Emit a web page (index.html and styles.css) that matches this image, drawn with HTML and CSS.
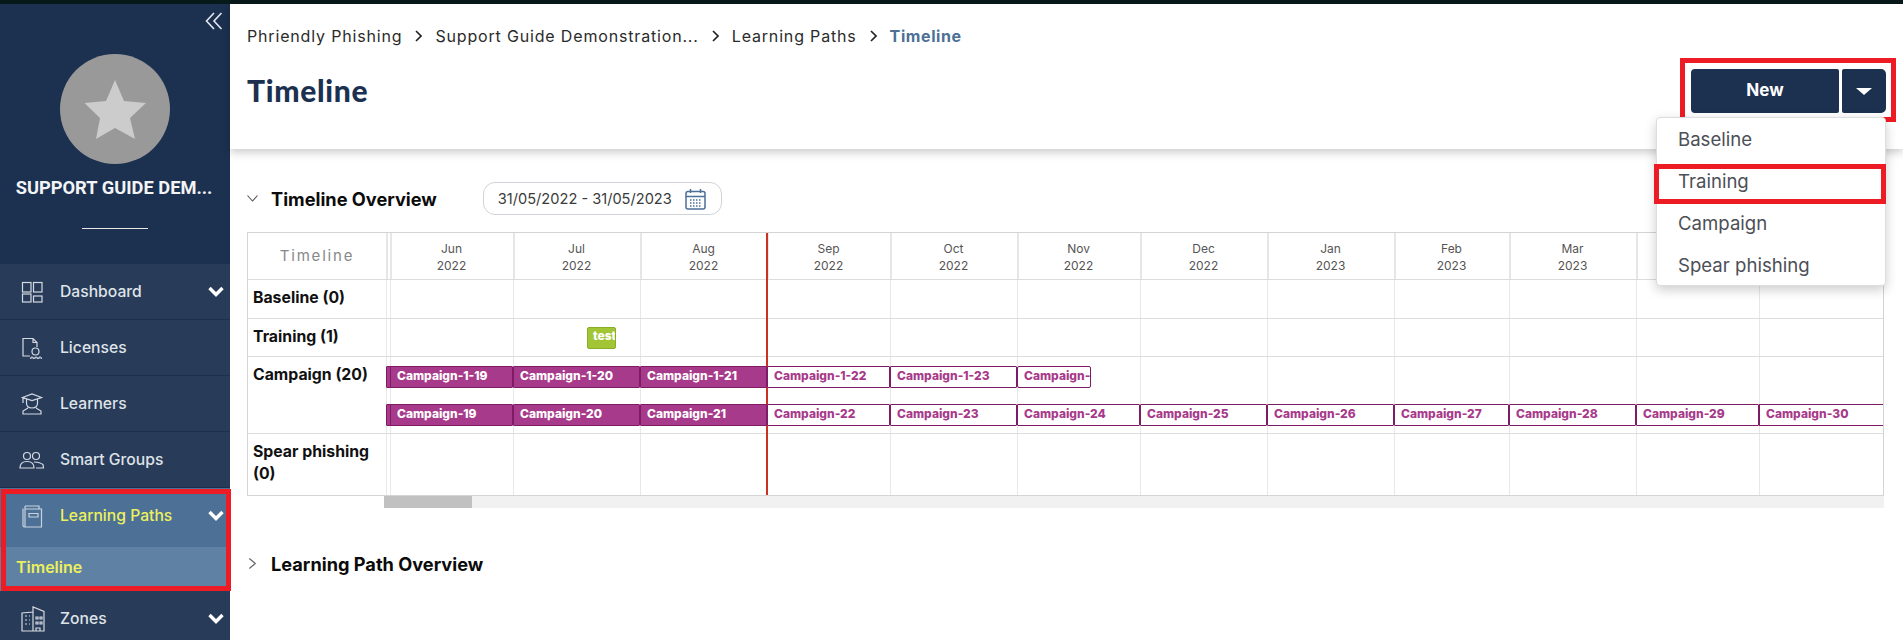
FILE: index.html
```html
<!DOCTYPE html>
<html lang="en">
<head>
<meta charset="utf-8">
<title>Timeline</title>
<link rel="stylesheet" href="styles.css">
</head>
<body>
<div class="topbar"></div>
<div class="app">
  <aside class="sidebar">
    <div class="collapse">
      <svg width="18" height="18" viewBox="0 0 18 18" fill="none" stroke="#e6e9ee" stroke-width="1.6"><path d="M9 1 1.5 9 9 17M16.5 1 9 9l7.500 8"/></svg>
    </div>
    <svg class="logo" width="110" height="110" viewBox="0 0 110 110"><circle cx="55" cy="55" r="55" fill="#999"/><path d="M55 26 64 47 86 49 70 64 75 85 55 74 36 85 40 64 24.500 49 46 47Z" fill="#ccc"/></svg>
    <div class="org">SUPPORT GUIDE DEM...</div>
    <div class="divider"></div>
    <nav class="menu">
      <div class="item">
        <svg class="icon" width="22" height="22" viewBox="0 0 22 22" fill="none" stroke="#d5dae2" stroke-width="1.200"><rect x="1.500" y="1.500" width="8.500" height="9.500"/><rect x="12.500" y="1.500" width="8.500" height="9.500"/><rect x="1.500" y="13" width="8.500" height="8"/><rect x="12.500" y="15" width="8.500" height="6"/></svg>
        <span>Dashboard</span>
        <svg class="chev" width="16" height="11" viewBox="0 0 16 11" fill="none" stroke="#fff" stroke-width="3.400"><path d="M1.500 2 8 8.500 14.500 2"/></svg>
      </div>
      <div class="item">
        <svg class="icon" width="22" height="22" viewBox="0 0 22 22" fill="none" stroke="#d5dae2" stroke-width="1.200"><path d="M9 19H2V1.500h10l4 4V10M12 1.500v4h4"/><circle cx="14.500" cy="14.500" r="3.500"/><path d="M11 20a1.300 1.300 0 1 0 .1 0M15 20a1.300 1.300 0 1 0 .1 0M19 20a1.300 1.300 0 1 0 .1 0"/></svg>
        <span>Licenses</span>
      </div>
      <div class="item">
        <svg class="icon" width="22" height="22" viewBox="0 0 22 22" fill="none" stroke="#d5dae2" stroke-width="1.200"><path d="M1.500 4.500 11 1l9.500 3.500L11 7.500ZM2 5v5M5.500 6.500V10c0 3.500 2.500 5 5.500 5s5.500-1.500 5.500-5V6.500M7 15l-5 3v3h18v-3l-5-3"/></svg>
        <span>Learners</span>
      </div>
      <div class="item">
        <svg class="icon icon-wide" width="26" height="22" viewBox="0 0 26 22" fill="none" stroke="#d5dae2" stroke-width="1.200"><circle cx="8" cy="7" r="3.500"/><circle cx="17" cy="7" r="3.500"/><path d="M1 19c0-4.500 3-6.500 7-6.500s7 2 7 6.500ZM15 13c3 .2 7 1 9 2.500l.5 3.500H17"/></svg>
        <span>Smart Groups</span>
      </div>
      <div class="group">
        <div class="item active">
          <svg class="icon" width="22" height="24" viewBox="0 0 22 24" fill="none" stroke="#c9d3df" stroke-width="1.200"><path d="M4 2h14v3M2 4.500V21.500c0 .8.700 1.500 1.500 1.500M4 5h16.500v18H4ZM4 2v3M8 9.500h9V13H8Z"/></svg>
          <span>Learning Paths</span>
          <svg class="chev" width="16" height="11" viewBox="0 0 16 11" fill="none" stroke="#fff" stroke-width="3.400"><path d="M1.500 2 8 8.500 14.500 2"/></svg>
        </div>
        <div class="sub">Timeline</div>
        <div class="mark mark-nav"></div>
      </div>
      <div class="item">
        <svg class="icon icon-mid" width="24" height="26" viewBox="0 0 24 26" fill="none" stroke="#d5dae2" stroke-width="1.200"><path d="M1 25V7l11-1V1l11 4.500V25ZM12 6v19M4 10h2M8 10h1M4 14h2M8 14h1M4 18h2M8 18h1M15 11h2v2h-2ZM19 11h2v2h-2ZM15 16h2v2h-2ZM19 16h2v2h-2ZM15 25v-3h4v3"/></svg>
        <span>Zones</span>
        <svg class="chev" width="16" height="11" viewBox="0 0 16 11" fill="none" stroke="#fff" stroke-width="3.400"><path d="M1.500 2 8 8.500 14.500 2"/></svg>
      </div>
    </nav>
  </aside>

  <main class="main">
    <header class="head">
      <div class="crumbs">
        <span>Phriendly Phishing</span>
        <svg class="sep" width="7" height="12" viewBox="0 0 7 12" fill="none" stroke="#222" stroke-width="1.600"><path d="M1 1l5 5-5 5"/></svg>
        <span>Support Guide Demonstration...</span>
        <svg class="sep" width="7" height="12" viewBox="0 0 7 12" fill="none" stroke="#222" stroke-width="1.600"><path d="M1 1l5 5-5 5"/></svg>
        <span>Learning Paths</span>
        <svg class="sep" width="7" height="12" viewBox="0 0 7 12" fill="none" stroke="#222" stroke-width="1.600"><path d="M1 1l5 5-5 5"/></svg>
        <span class="current">Timeline</span>
      </div>
      <div class="title-row">
        <h1>Timeline</h1>
        <div class="actions">
          <button class="btn btn-new">New</button>
          <button class="btn btn-caret"><span class="caret"></span></button>
          <div class="mark mark-new"></div>
          <ul class="dropdown">
            <li>Baseline</li>
            <li>Training</li>
            <li>Campaign</li>
            <li>Spear phishing</li>
            <li class="mark mark-training"></li>
          </ul>
        </div>
      </div>
    </header>

    <section class="overview">
      <div class="section-head">
        <svg class="toggle" width="11" height="7" viewBox="0 0 11 7" fill="none" stroke="#555" stroke-width="1.100"><path d="M.5.500l5 5.500 5-5.500"/></svg>
        <h2>Timeline Overview</h2>
        <div class="dates">
          <span>31/05/2022 - 31/05/2023</span>
          <svg width="21" height="22" viewBox="0 0 21 22" fill="none" stroke="#4c7096" stroke-width="1.500"><rect x="1" y="3.500" width="19" height="17.500" rx="2"/><path d="M1 8.500h19M5.500 1v4M15.500 1v4"/><path d="M5 12h11M5 15h11M5 18h11" stroke-dasharray="1.500 1.500"/></svg>
        </div>
      </div>

      <div class="gantt">
        <div class="today"></div>
        <div class="row row-head">
          <div class="corner">Timeline</div>
          <div class="cell"></div>
          <div class="cell month">Jun<br>2022</div>
          <div class="cell month">Jul<br>2022</div>
          <div class="cell month">Aug<br>2022</div>
          <div class="cell month">Sep<br>2022</div>
          <div class="cell month">Oct<br>2022</div>
          <div class="cell month">Nov<br>2022</div>
          <div class="cell month">Dec<br>2022</div>
          <div class="cell month">Jan<br>2023</div>
          <div class="cell month">Feb<br>2023</div>
          <div class="cell month">Mar<br>2023</div>
          <div class="cell month">Apr<br>2023</div>
          <div class="cell month">May<br>2023</div>
        </div>
        <div class="row row-baseline">
          <div class="label">Baseline (0)</div>
          <div class="cell"></div><div class="cell"></div><div class="cell"></div><div class="cell"></div><div class="cell"></div><div class="cell"></div><div class="cell"></div><div class="cell"></div><div class="cell"></div><div class="cell"></div><div class="cell"></div><div class="cell"></div><div class="cell"></div>
        </div>
        <div class="row row-training">
          <div class="label">Training (1)</div>
          <div class="cell"></div><div class="cell"></div>
          <div class="cell"><div class="test"><span>test</span></div></div>
          <div class="cell"></div><div class="cell"></div><div class="cell"></div><div class="cell"></div><div class="cell"></div><div class="cell"></div><div class="cell"></div><div class="cell"></div><div class="cell"></div><div class="cell"></div>
        </div>
        <div class="row row-campaign">
          <div class="label span">Campaign (20)</div>
          <div class="cell span c2"></div><div class="cell span c3"></div><div class="cell span c4"></div><div class="cell span c5"></div><div class="cell span c6"></div><div class="cell span c7"></div><div class="cell span c8"></div><div class="cell span c9"></div><div class="cell span c10"></div><div class="cell span c11"></div><div class="cell span c12"></div><div class="cell span c13"></div><div class="cell span c14"></div>

          <div class="bar past l1 c2"></div>
          <div class="bar past l1 c3">Campaign-1-19</div>
          <div class="bar past l1 c4">Campaign-1-20</div>
          <div class="bar past l1 c5">Campaign-1-21</div>
          <div class="bar l1 c6">Campaign-1-22</div>
          <div class="bar l1 c7">Campaign-1-23</div>
          <div class="bar l1 c8 short">Campaign-1-24</div>

          <div class="bar past l2 c2"></div>
          <div class="bar past l2 c3">Campaign-19</div>
          <div class="bar past l2 c4">Campaign-20</div>
          <div class="bar past l2 c5">Campaign-21</div>
          <div class="bar l2 c6">Campaign-22</div>
          <div class="bar l2 c7">Campaign-23</div>
          <div class="bar l2 c8">Campaign-24</div>
          <div class="bar l2 c9">Campaign-25</div>
          <div class="bar l2 c10">Campaign-26</div>
          <div class="bar l2 c11">Campaign-27</div>
          <div class="bar l2 c12">Campaign-28</div>
          <div class="bar l2 c13">Campaign-29</div>
          <div class="bar l2 c14 open">Campaign-30</div>
        </div>
        <div class="row row-spear">
          <div class="label">Spear phishing (0)</div>
          <div class="cell"></div><div class="cell"></div><div class="cell"></div><div class="cell"></div><div class="cell"></div><div class="cell"></div><div class="cell"></div><div class="cell"></div><div class="cell"></div><div class="cell"></div><div class="cell"></div><div class="cell"></div><div class="cell"></div>
        </div>
      </div>
      <div class="track"><div class="thumb"></div></div>

      <div class="section-head second">
        <svg class="toggle" width="8" height="11" viewBox="0 0 8 11" fill="none" stroke="#666" stroke-width="1.200"><path d="M.8.500l6 5-6 5"/></svg>
        <h2>Learning Path Overview</h2>
      </div>
    </section>
  </main>
</div>
</body>
</html>
```
FILE: styles.css
```css
* { box-sizing: border-box; }
html, body { margin: 0; height: 640px; overflow: hidden; background: #fff; }
body { font-family: Inter, "Liberation Sans", sans-serif; color: #222; }

.topbar { height: 4px; background: #08191a; }
.app { display: flex; height: 636px; }

/* Sidebar */
.sidebar { position: relative; width: 230px; flex: none; background: #1c3050; padding-top: 8px; }
.collapse { display: flex; justify-content: flex-end; padding-right: 7px; height: 18px; }
.logo { display: block; margin: 24px auto 0; }
.org { margin-top: 12px; height: 24px; text-align: center; padding-right: 2px; font: 700 18.300px/24px Roboto, sans-serif; color: #f2f4f6; white-space: nowrap; }
.divider { width: 66px; height: 1px; background: #e8e8e8; margin: 28px auto 35px; }
.menu { display: flex; flex-direction: column; }
.item { display: flex; align-items: center; height: 56px; padding: 0 6px 0 21px; background: #283b59; border-bottom: 1px solid #1c3050; color: #dfe3e8; font-size: 15.700px; font-weight: 500; }
.item .icon { flex: none; margin-right: 17px; }
.item .icon-wide { margin-left: -2px; margin-right: 15px; }
.item .icon-mid { margin-right: 15px; }
.item .chev { margin-left: auto; }
.group { position: relative; }
.item.active { height: 59px; background: #4c7096; color: #ecf05e; padding-bottom: 4px; border-bottom: 0; }
.sub { height: 44px; line-height: 40px; padding-left: 16px; background: #5f81a3; color: #ecf05e; font-size: 16px; font-weight: 600; }

/* Red annotation boxes */
.mark { position: absolute; border: 5px solid #ed1c24; pointer-events: none; list-style: none; padding: 0; }
.mark-nav { left: 1px; top: 1px; width: 230px; height: 102px; }
.mark-new { left: -11px; top: -11px; width: 216px; height: 64px; }
.mark-training { left: -3px; top: 46px; width: 232px; height: 40px; }

/* Header */
.main { flex: 1; min-width: 0; }
.head { height: 145px; padding: 0 17px; background: #fff; box-shadow: 0 3px 9px rgba(0, 0, 0, .22); position: relative; z-index: 1; }
.crumbs { display: flex; align-items: center; height: 63px; font-size: 16px; letter-spacing: .83px; color: #2b2b2b; }
.sep { margin: 0 13px; flex: none; }
.current { font-weight: 700; color: #4c7096; letter-spacing: .6px; }
.title-row { display: flex; justify-content: space-between; align-items: flex-start; }
h1 { margin: 0; font: 900 30px/46px Lato, sans-serif; color: #1c3050; letter-spacing: .7px; }
.actions { position: relative; display: flex; gap: 3px; margin-top: 2px; }
.btn { border: 0; height: 44px; padding: 0 0 2px; background: #1c3050; color: #fff; border-radius: 4px 2px 2px 4px; font: 700 17px Inter, sans-serif; }
.btn-new { width: 148px; }
.btn-caret { width: 44px; padding: 0; border-radius: 2px 5px 5px 2px; display: flex; align-items: center; justify-content: center; }
.caret { width: 0; height: 0; border: 8.500px solid transparent; border-top: 7.500px solid #fff; border-bottom: 0; }
.dropdown { position: absolute; left: -35px; top: 48px; width: 230px; height: 169px; margin: 0; padding: 0; list-style: none; background: #fff; border: 1px solid #ddd; border-radius: 4px; box-shadow: 0 4px 12px rgba(0, 0, 0, .2); font-size: 18.600px; color: #4c4f57; z-index: 3; }
.dropdown li:not(.mark) { height: 42px; line-height: 42px; padding-left: 21px; }

/* Overview */
.overview { padding: 33px 19px 0 17px; }
.section-head { display: flex; align-items: center; height: 33px; }
.toggle { flex: none; }
.section-head > .toggle { width: 11px; margin-right: 13px; }
h2 { margin: 0; font-size: 18.200px; font-weight: 700; color: #0b0b0b; white-space: nowrap; }
.dates { display: flex; align-items: center; justify-content: space-between; width: 239px; height: 33px; margin-left: 46px; padding: 0 15px 0 14px; border: 1px solid #cfd3d8; border-radius: 12px; font-size: 14.600px; color: #3a3a3a; }
.second { margin-top: 39px; }

/* Gantt */
.gantt { position: relative; margin-top: 17px; width: 1637px; border: 1px solid #d4d4d4; overflow: hidden; }
.today { position: absolute; left: 518px; top: 0; bottom: 0; width: 2px; background: #c8321e; }
.row { display: grid; grid-template-columns: 138px 4px 123px 127px 127px 123px 127px 123px 127px 127px 115px 127px 123px 125px; border-top: 1px solid #dcdcdc; }
.row-head { height: 46px; border-top: 0; }
.row-baseline { height: 39px; }
.row-training { height: 38px; }
.row-campaign { height: 77px; grid-template-rows: 9px 22px 16px 22px 7px; }
.row-spear { height: 62px; }
.cell { border-left: 1px solid #e8e8e8; min-width: 0; }
.row-head .cell { border-left: 2px solid #e6e6e6; }
.corner { display: flex; align-items: center; justify-content: center; font-size: 15px; letter-spacing: 1.800px; color: #888; padding-bottom: 1px; }
.month { text-align: center; font-size: 12px; line-height: 17px; color: #555; padding: 7px 2px 0 0; }
.label { padding: 7px 4px 0 5px; font-size: 15.800px; font-weight: 700; line-height: 22px; color: #111; }
.span { grid-row: 1 / -1; }
.row-campaign .label { grid-column: 1; }

.c2 { grid-column: 2; } .c3 { grid-column: 3; } .c4 { grid-column: 4; } .c5 { grid-column: 5; }
.c6 { grid-column: 6; } .c7 { grid-column: 7; } .c8 { grid-column: 8; } .c9 { grid-column: 9; }
.c10 { grid-column: 10; } .c11 { grid-column: 11; } .c12 { grid-column: 12; } .c13 { grid-column: 13; }
.c14 { grid-column: 14; }
.l1 { grid-row: 2; }
.l2 { grid-row: 4; }

.bar { position: relative; z-index: 1; min-width: 0; overflow: hidden; white-space: nowrap; padding: 0 0 3px 6px; background: #fff; border: 1px solid #7f1a65; border-radius: 1px; color: #a73a8a; font-size: 12px; font-weight: 800; line-height: 17px; }
.bar.past { background: #a73a8a; color: #fff; }
.bar.short { width: 74px; border-radius: 2px; justify-self: start; }
.bar.open { border-right: 0; }
.test { position: relative; z-index: 1; width: 29px; height: 22px; margin: 8px 0 0 73px; padding-left: 5px; overflow: hidden; background: #a1c534; border: 1px solid #8aad28; border-radius: 2px; color: #fff; font-size: 12px; font-weight: 800; line-height: 16px; white-space: nowrap; }

.track { height: 12px; margin-left: 137px; width: 1500px; background: #f1f1f1; }
.thumb { width: 88px; height: 100%; background: #c1c1c1; }
```
